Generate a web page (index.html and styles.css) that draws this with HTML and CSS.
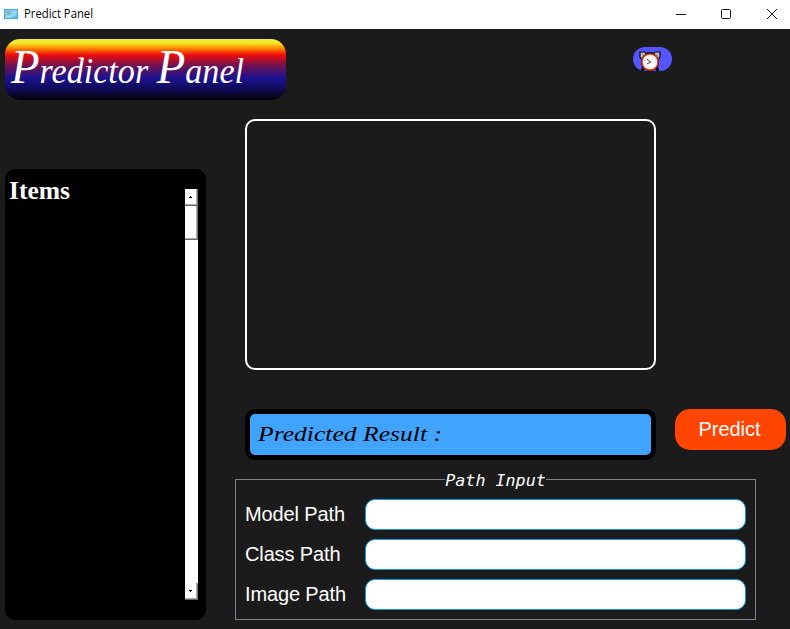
FILE: index.html
```html
<!DOCTYPE html>
<html lang="en">
<head>
<meta charset="utf-8">
<title>Predict Panel</title>
<link rel="stylesheet" href="styles.css">
</head>
<body>
<header class="titlebar">
  <svg class="app-icon" width="14" height="10" viewBox="0 0 14 10">
    <defs><linearGradient id="screen" x2="1" y2="1"><stop offset="0" stop-color="#69bdf0"/><stop offset=".6" stop-color="#8ed8fa"/><stop offset="1" stop-color="#42a7e8"/></linearGradient></defs>
    <rect x=".5" y=".5" width="13" height="9" fill="url(#screen)" stroke="#4ba6dc"/>
    <circle cx="4.8" cy="4" r="2" fill="#55a8d8"/><path d="M4.8 4V2a2 2 0 0 1 2 2z" fill="#f3b63f"/><path d="M3 4.5h2v1.2H3z" fill="#d9bd60"/>
    <path d="M3 7.5h5M11 3v1M11 6v1" stroke="#a5e0fa"/>
  </svg>
  <svg class="window-name" width="72" height="20"><text x="0" y="14" textLength="69" lengthAdjust="spacingAndGlyphs">Predict Panel</text></svg>
  <svg class="controls" width="104" height="12" viewBox="0 0 104 12" fill="none" stroke="#181818">
    <path d="M1 6.5h10"/><rect x="46.5" y="1.5" width="9" height="9" rx="1"/><path d="M92 1l10 10M102 1L92 11"/>
  </svg>
</header>
<section class="banner">
  <svg class="logo" width="281" height="61"><text x="6" y="44" textLength="233" lengthAdjust="spacingAndGlyphs"><tspan class="initial">P</tspan>redictor <tspan class="initial">P</tspan>anel</text></svg>
  <button class="clock" aria-label="Timer">
    <svg width="22" height="20" viewBox="0 0 22 20">
      <path d="M3 20l2-4M19 20l-2-4" stroke="#080808" stroke-width="3"/>
      <path d="M1 1h5l2 3-5 5-2-3zM21 1h-5l-2 3 5 5 2-3z" fill="#b9b9b9" stroke="#080808" stroke-width="1.2"/>
      <path d="M8 2.2h6" stroke="#080808" stroke-width="2"/>
      <circle cx="11" cy="11" r="9.2" fill="#080808"/>
      <circle cx="11" cy="11" r="8" fill="#fff" stroke="#ed3b1c" stroke-width="1.5"/>
      <circle cx="11" cy="11" r="5.8" fill="none" stroke="#ccc" stroke-dasharray="1 2.04"/>
      <path d="M8 8l3.5 3L8 13" fill="none" stroke="#333" stroke-width="1"/><circle cx="11.3" cy="11" r=".8" fill="#e33"/>
    </svg>
  </button>
</section>
<main class="workspace">
  <aside class="items">
    <svg class="items-name" width="70" height="36"><text x="4" y="30" textLength="61" lengthAdjust="spacingAndGlyphs">Items</text></svg>
    <div class="scrollbar">
      <div class="arrow"><svg width="3" height="2"><path d="M1 0h1v1h1v1H0V1h1z"/></svg></div>
      <div class="thumb"></div>
      <div class="arrow arrow-down"><svg width="3" height="2"><path d="M0 0h3v1H2v1H1V1H0z"/></svg></div>
    </div>
  </aside>
  <div class="content">
    <div class="preview"></div>
    <div class="result-row">
      <div class="result"><svg width="200" height="41"><text x="8" y="27" textLength="184" lengthAdjust="spacingAndGlyphs">Predicted Result :</text></svg></div>
      <button class="predict">Predict</button>
    </div>
    <fieldset class="paths">
      <legend>Path Input</legend>
      <label class="field"><span>Model Path</span><input type="text"></label>
      <label class="field"><span>Class Path</span><input type="text"></label>
      <label class="field"><span>Image Path</span><input type="text"></label>
    </fieldset>
  </div>
</main>
</body>
</html>
```
FILE: styles.css
```css
* { box-sizing: border-box; }
body {
  margin: 0;
  height: 629px;
  overflow: hidden;
  background: #1b1b1b;
  color: #fff;
  font-family: "Liberation Sans", sans-serif;
}
svg { display: block; flex: none; }
button { border: 0; padding: 0; font: inherit; color: inherit; }
.titlebar {
  display: flex;
  align-items: center;
  height: 29px;
  padding: 0 11px 2px 4px;
  background: #fff;
}
.window-name { margin-left: 6px; font: 12px "Open Sans", sans-serif; fill: #000; }
.controls { margin-left: auto; }
.banner {
  display: flex;
  align-items: flex-start;
  height: 90px;
  padding: 10px 5px;
}
.logo {
  border-radius: 15px;
  background: linear-gradient(#eeee38 0, #f5e52b 7%, #ff8a00 15%, #f00c0c 26%, #73124f 43%, #1b1291 64%, #100b58 82%, #060416 97%, #000 100%);
  fill: #fff;
  font: italic 35px "Liberation Serif", serif;
}
.initial { font-size: 48px; }
.clock {
  display: flex;
  width: 39px;
  height: 24px;
  margin: 8px 0 0 347px;
  padding: 4px 0 0 6px;
  border-radius: 12px;
  background: #5555ff;
}
.workspace { display: flex; padding-left: 5px; }
.items {
  display: flex;
  justify-content: space-between;
  width: 201px;
  height: 451px;
  margin-top: 50px;
  padding-right: 8px;
  border-radius: 10px;
  background: #000;
}
.items-name { fill: #fff; font: bold 25px "Liberation Serif", serif; }
.scrollbar {
  display: flex;
  flex-direction: column;
  width: 13px;
  height: 411px;
  margin-top: 20px;
  background: #fff;
}
.arrow {
  display: flex;
  align-items: center;
  justify-content: center;
  height: 17px;
  padding-right: 2px;
  border-right: 1px solid #777;
  border-bottom: 1px solid #686868;
  box-shadow: inset -1px -1px #aaa;
}
.thumb {
  height: 34px;
  border-right: 1px solid #777;
  border-bottom: 1px solid #686868;
  box-shadow: inset -1px -1px #aaa;
}
.arrow-down { margin-top: auto; }
.content { width: 551px; margin-left: 29px; }
.preview {
  width: 411px;
  height: 251px;
  margin-left: 10px;
  border: 2px solid #fff;
  border-radius: 10px;
}
.result-row { display: flex; gap: 19px; margin: 39px 0 0 10px; }
.result {
  width: 411px;
  height: 51px;
  border: 5px solid #000;
  border-radius: 10px;
  background: #40a4ff;
  font: italic 22px "Liberation Serif", serif;
}
.predict {
  width: 111px;
  height: 41px;
  padding-right: 2px;
  border-radius: 15px;
  background: #ff4500;
  font-size: 20px;
}
.paths {
  width: 521px;
  height: 150px;
  margin: 10px 0 0;
  padding: 10px 9px 0;
  border: 1px solid #808086;
}
.paths legend {
  height: 19px;
  margin: 0 auto;
  padding: 0;
  font: italic 16.7px/20px "DejaVu Sans Mono", monospace;
}
.field { display: flex; align-items: center; height: 31px; margin-bottom: 9px; font-size: 20px; letter-spacing: -.13px; }
.field span { width: 120px; }
.field input {
  width: 381px;
  height: 31px;
  padding: 0 8px;
  border: 1px solid #0b9ce5;
  border-radius: 10px;
  background: #fff;
}
```
